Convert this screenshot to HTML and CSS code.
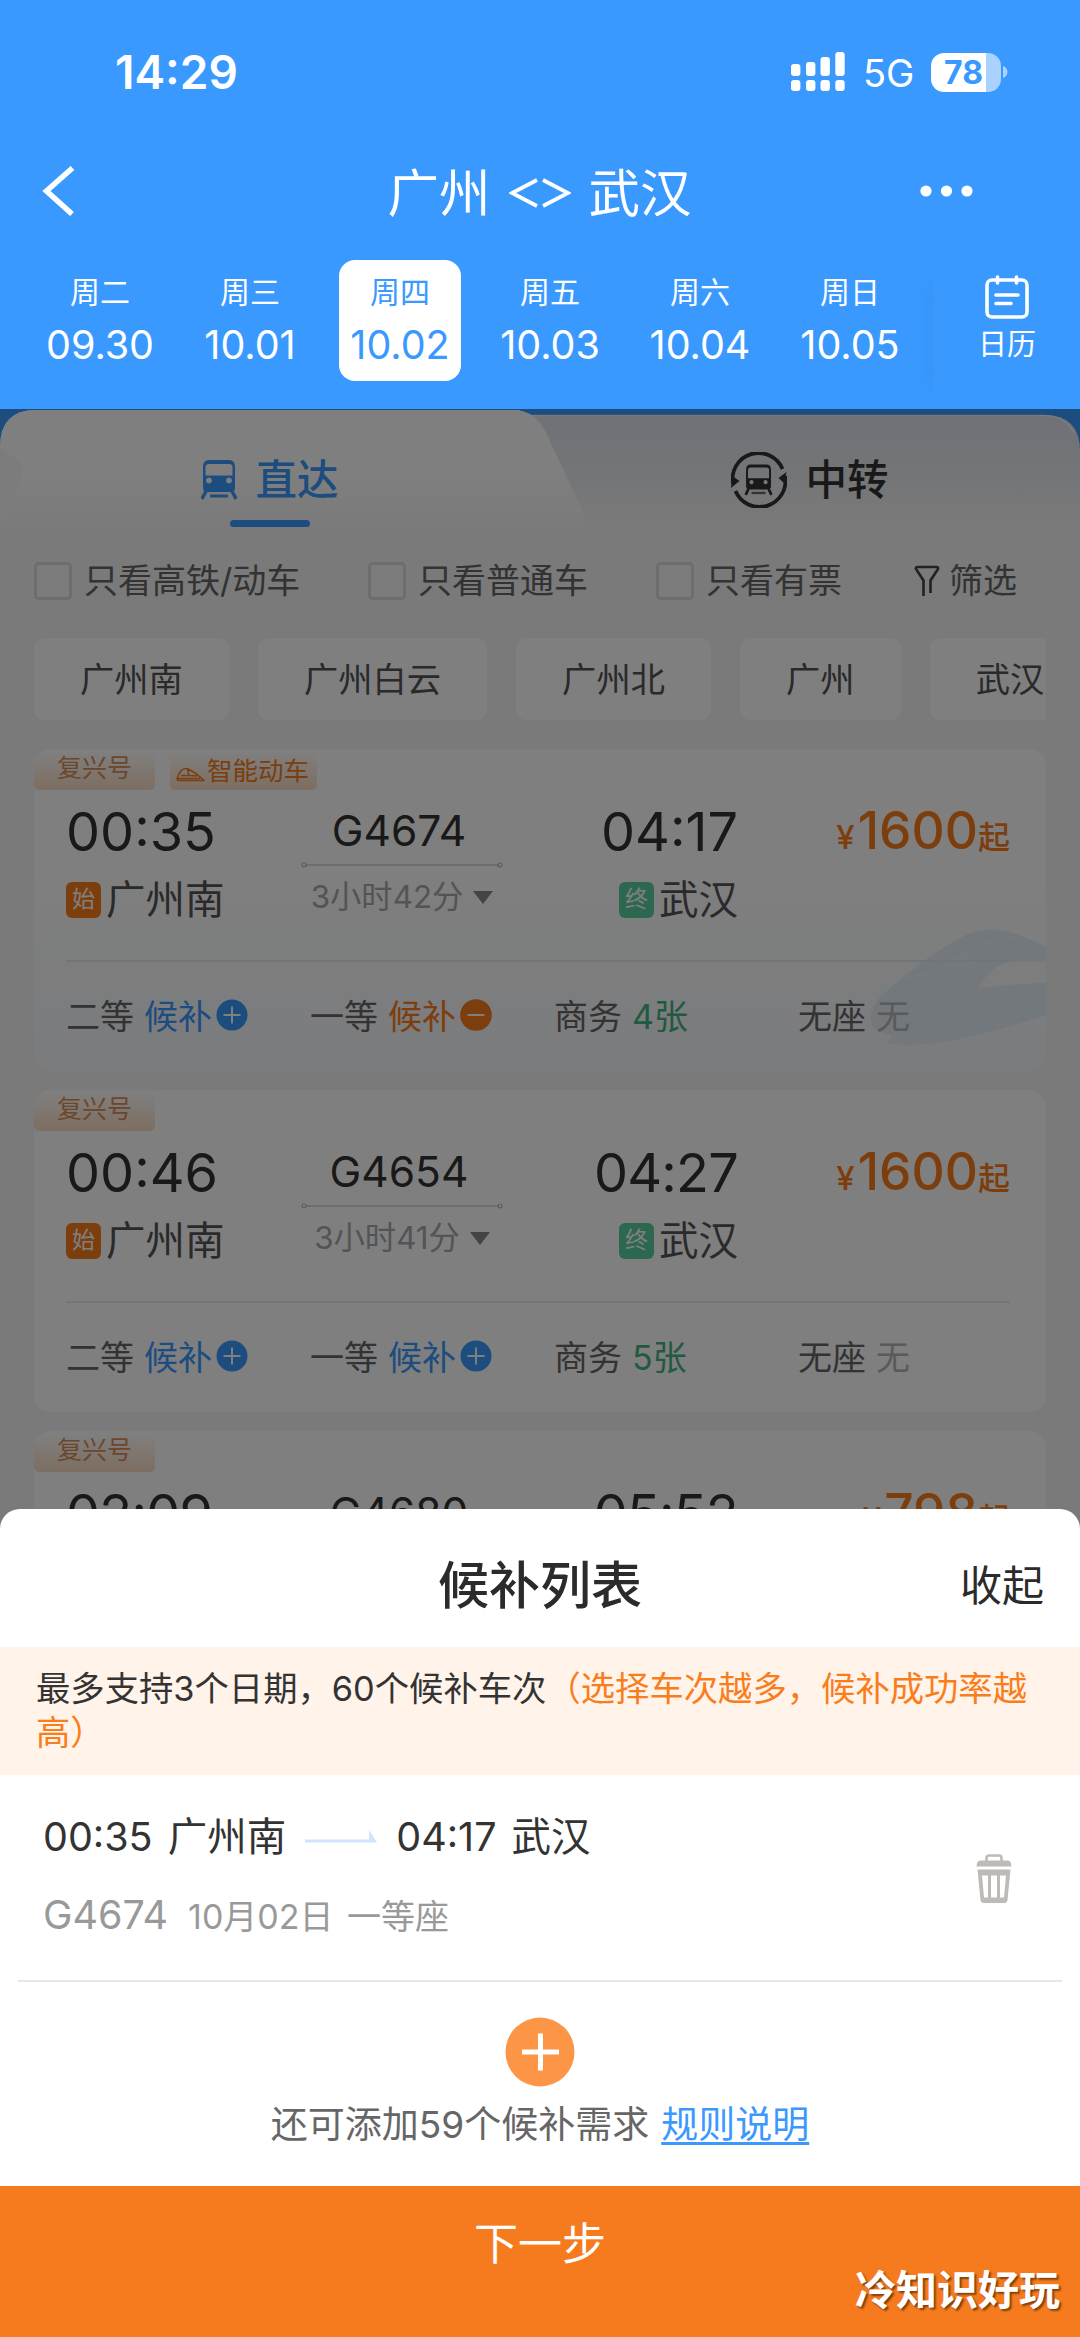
FILE: index.html
```html
<!DOCTYPE html>
<html lang="zh-CN">
<head>
<meta charset="utf-8">
<title>广州 &lt;&gt; 武汉</title>
<link rel="stylesheet" href="styles.css">
</head>
<body>
<svg class="sprite" width="0" height="0" aria-hidden="true">
  <symbol id="plus" viewBox="0 0 32 32"><circle cx="16" cy="16" r="15.5" fill="#3b99fc"/><path d="M7.5 16h17M16 7.5v17" stroke="#fff" stroke-width="2"/></symbol>
  <symbol id="minus" viewBox="0 0 32 32"><circle cx="16" cy="16" r="15.8" fill="#fa7d1b"/><path d="M7.5 16h17" stroke="#fff" stroke-width="2"/></symbol>
  <symbol id="span" viewBox="0 0 202 6"><g fill="none" stroke="#b3b6bc" stroke-width="1.2"><circle cx="3" cy="3" r="2"/><path d="M5 3h192"/><circle cx="199" cy="3" r="2"/></g></symbol>
</svg>
<div class="screen">
  <header class="header">
    <div class="status">
      <span class="clock">14:29</span>
      <div class="status-right">
        <svg class="signal" width="54" height="40" viewBox="0 0 54 40" fill="#fff"><rect x="0" y="12" width="9.4" height="12" rx="3"/><rect x="15" y="10" width="9.4" height="14" rx="3"/><rect x="29.5" y="5" width="9.4" height="19" rx="3"/><rect x="44.3" y="0" width="9.4" height="24" rx="3"/><rect x="0" y="28" width="9.4" height="11" rx="3"/><rect x="15" y="28" width="9.4" height="11" rx="3"/><rect x="29.5" y="28" width="9.4" height="11" rx="3"/><rect x="44.3" y="28" width="9.4" height="11" rx="3"/></svg>
        <span class="net">5G</span>
        <span class="battery">78</span>
        <svg class="nub" width="5" height="12" viewBox="0 0 5 12"><path d="M0 0c6 2 6 10 0 12z" fill="#a9d3fe"/></svg>
      </div>
    </div>
    <div class="nav">
      <svg width="34" height="50" viewBox="0 0 34 50"><path d="M30.500 2 4.500 25l25.500 23" fill="none" stroke="#fff" stroke-width="5.500"/></svg>
      <h1 class="route">广州 <svg width="62" height="30" viewBox="0 0 62 30"><path d="M28 2 3 15 28 28M34 2l25 13L34 28" fill="none" stroke="#fff" stroke-width="3.800"/></svg> 武汉</h1>
      <svg width="53" height="12" viewBox="0 0 53 12" fill="#fff"><circle cx="6" cy="6" r="5.600"/><circle cx="26.500" cy="6" r="5.600"/><circle cx="47" cy="6" r="5.600"/></svg>
    </div>
    <div class="dates">
      <div class="day"><span>周二</span><b>09.30</b></div>
      <div class="day"><span>周三</span><b>10.01</b></div>
      <div class="day on"><span>周四</span><b>10.02</b></div>
      <div class="day"><span>周五</span><b>10.03</b></div>
      <div class="day"><span>周六</span><b>10.04</b></div>
      <div class="day"><span>周日</span><b>10.05</b></div>
      <div class="calendar">
        <svg width="44" height="44" viewBox="0 0 44 44" fill="none" stroke="#fff" stroke-width="3.600" stroke-linecap="round"><rect x="2" y="5" width="40" height="37" rx="5"/><path d="M12.500 2v6M31.500 2v6M11 20h22M11 28.500h15"/></svg>
        <span>日历</span>
      </div>
    </div>
  </header>

  <main class="results">
    <div class="tabs">
      <svg class="tab-shape" width="1080" height="118" viewBox="0 0 1080 118">
        <defs>
          <linearGradient id="near" x2="0" y2="1"><stop offset=".5" stop-color="#fff"/><stop offset="1" stop-color="#f5f5f5"/></linearGradient>
          <linearGradient id="far" x2="0" y2="1"><stop offset="0" stop-color="#dde3ed"/><stop offset=".55" stop-color="#e9ebef"/><stop offset="1" stop-color="#f4f4f4"/></linearGradient>
        </defs>
        <path d="M0 118V38Q0 1 36 1H520V118z" fill="#f9f9f9"/>
        <path d="M500 6H1044Q1080 6 1080 42V118H500z" fill="url(#far)"/>
        <path d="M500 6.500H1044Q1066 7 1074 24" fill="none" stroke="#fff" stroke-opacity=".7" stroke-width="1.500"/>
        <path d="M6 118Q16 90 24 56L0 38Q0 1 36 1H512C532 1 541 12 548 28L590 118z" fill="url(#near)"/>
      </svg>
      <div class="tab active">
        <div class="tab-label">
          <svg width="36" height="40" viewBox="0 0 36 40"><path fill="#3b99fc" fill-rule="evenodd" d="M8 0h20q6 0 6 7v21q0 4-4 4H6q-4 0-4-4V7q0-7 6-7zM4.500 6v9.500h27V6q-1-2-3-2h-21q-2 0-3 2zM8 17.500a3 3 0 1 0 .01 0zM28 17.500a3 3 0 1 0 .01 0z"/><path d="M5 31.500.8 39M31 31.500l4.200 7.500" stroke="#3b99fc" stroke-width="3.500"/><path d="M9 36h18" stroke="#3b99fc" stroke-width="3"/></svg>
          <span>直达</span>
        </div>
        <i class="bar"></i>
      </div>
      <div class="tab">
        <div class="tab-label">
          <svg width="56" height="56" viewBox="0 0 56 56"><path d="M51.500 17A26 26 0 0 0 2 32M4.500 39A26 26 0 0 0 54 24" fill="none" stroke="#333" stroke-width="3.800"/><path d="M0 36 1.500 24l7 5zM55.500 20l-8 6 5.500 5z" fill="#333"/><g transform="translate(13.500 12.500) scale(.78)"><path fill="#333" fill-rule="evenodd" d="M8 0h20q6 0 6 7v21q0 4-4 4H6q-4 0-4-4V7q0-7 6-7zM4.500 6v11.500h27V6q-1-2-3-2h-21q-2 0-3 2zM9 20a2.600 2.600 0 1 0 .01 0zM27 20a2.600 2.600 0 1 0 .01 0z"/><path d="M5 31.500 1.500 39M31 31.500l3.500 7.500" stroke="#333" stroke-width="3.500"/><path d="M9 36.500h18" stroke="#666" stroke-width="3"/></g></svg>
          <span>中转</span>
        </div>
      </div>
    </div>

    <div class="filters">
      <label class="check f1"><i></i>只看高铁/动车</label>
      <label class="check f2"><i></i>只看普通车</label>
      <label class="check f3"><i></i>只看有票</label>
      <span class="more"><svg width="26" height="32" viewBox="0 0 26 32"><path d="M9.500 31V15.500L2 4q-.5-2 1.500-2h19q2 0 1.500 2l-7.500 11.500V28" fill="none" stroke="#444" stroke-width="2.600"/></svg>筛选</span>
    </div>

    <div class="stations">
      <span>广州南</span><span>广州白云</span><span>广州北</span><span>广州</span><span>武汉</span>
    </div>

    <div class="trains">
      <article class="card smart">
        <svg class="train-art" width="178" height="118" viewBox="0 0 178 118"><path d="M178 18C150 4 126-5 98 6 72 18 36 46 12 68-2 84-2 104 24 106L20 114C64 122 128 102 178 86V54C150 55 132 56 110 60 118 44 132 32 148 33H178z" fill="#e6f1fb"/><path d="M34 47C70 54 92 14 148 8M80 36q18-10 32-6-14 10-32 6z" fill="none" stroke="#eff5fb" stroke-width="2"/></svg>
        <div class="tags"><span class="tag">复兴号</span><span class="tag wide"><svg width="29" height="15" viewBox="0 0 29 15" fill="none" stroke="#f57c1f" stroke-width="1.500"><path d="M1 12Q4 1 11 1.500 19 5 28 13.500H2zM5 8.500h8l-1.500-6M13 8.500l8 .5M1 11.500h23"/></svg>智能动车</span></div>
        <div class="trip">
          <div class="from"><strong>00:35</strong><p><i class="mark">始</i>广州南</p></div>
          <div class="mid"><b>G4674</b><svg width="202" height="6"><use href="#span"/></svg><p>3小时42分<i class="caret"></i></p></div>
          <div class="to"><strong>04:17</strong><p><i class="mark end">终</i>武汉</p></div>
          <div class="price"><small>¥</small><b>1600</b><em>起</em></div>
        </div>
        <div class="seats">
          <span>二等 <a>候补</a><svg width="32" height="32"><use href="#plus"/></svg></span>
          <span>一等 <a class="picked">候补</a><svg width="32" height="32"><use href="#minus"/></svg></span>
          <span>商务 <a class="left">4张</a></span>
          <span>无座 <a class="none">无</a></span>
        </div>
      </article>

      <article class="card">
        <div class="tags"><span class="tag">复兴号</span></div>
        <div class="trip">
          <div class="from"><strong>00:46</strong><p><i class="mark">始</i>广州南</p></div>
          <div class="mid"><b>G4654</b><svg width="202" height="6"><use href="#span"/></svg><p>3小时41分<i class="caret"></i></p></div>
          <div class="to"><strong class="snug">04:27</strong><p><i class="mark end">终</i>武汉</p></div>
          <div class="price"><small>¥</small><b>1600</b><em>起</em></div>
        </div>
        <div class="seats">
          <span>二等 <a>候补</a><svg width="32" height="32"><use href="#plus"/></svg></span>
          <span>一等 <a>候补</a><svg width="32" height="32"><use href="#plus"/></svg></span>
          <span>商务 <a class="left">5张</a></span>
          <span>无座 <a class="none">无</a></span>
        </div>
      </article>

      <article class="card">
        <div class="tags"><span class="tag">复兴号</span></div>
        <div class="trip">
          <div class="from"><strong class="snug">02:09</strong></div>
          <div class="mid"><b>G4680</b></div>
          <div class="to"><strong class="snug">05:52</strong></div>
          <div class="price"><small>¥</small><b>798</b><em>起</em></div>
        </div>
      </article>
    </div>
    <div class="mask"></div>
  </main>

  <section class="sheet">
    <div class="sheet-head"><h2>候补列表</h2><span class="fold">收起</span></div>
    <p class="notice">最多支持3个日期，60个候补车次<em>（选择车次越多，候补成功率越高）</em></p>
    <div class="pick">
      <div class="pick-info">
        <div class="pick-route"><span>00:35 广州南</span><svg width="72" height="13" viewBox="0 0 72 13"><path d="M0 9.500h64V0l8 12.500H0z" fill="#cfe4fd"/></svg><span>04:17 武汉</span></div>
        <div class="pick-meta"><b>G4674</b><span>10月02日 一等座</span></div>
      </div>
      <svg class="trash" width="36" height="50" viewBox="0 0 36 50"><path d="M10.500 8V4q0-2.500 2.500-2.500h10q2.500 0 2.500 2.500v4" fill="none" stroke="#bdbab8" stroke-width="2.600"/><path fill="#bdbab8" fill-rule="evenodd" d="M4 6.500h28q3 0 3.500 6H.5Q1 6.500 4 6.500zM1.500 15.500h33L31.500 46q-.3 3-3.500 3H8q-3.200 0-3.500-3zM6 21.500l2 22h4v-22zM15 21.500v22h6v-22zM24 21.500v22h4l2-22z"/></svg>
    </div>
    <div class="add">
      <svg width="70" height="70" viewBox="0 0 70 70"><circle cx="35" cy="35" r="34.500" fill="#fc9546"/><path d="M17 35h37M35.500 16.500v37" stroke="#fff" stroke-width="5"/></svg>
      <p>还可添加59个候补需求<a>规则说明</a></p>
    </div>
    <div class="next">下一步</div>
    <span class="signature">冷知识好玩</span>
  </section>
</div>
</body>
</html>
```
FILE: styles.css
```css
* { box-sizing: border-box; margin: 0; padding: 0; }
body { font-family: Inter, "Noto Sans CJK SC", sans-serif; color: #333; background: #fff; }
svg { display: block; flex: none; }
i, em { font-style: normal; }
b, strong, h1 { font-weight: 400; }
.sprite { position: absolute; }
.screen { position: relative; width: 1080px; height: 2337px; overflow: hidden; display: flex; flex-direction: column; }

/* header */
.header { height: 409px; flex: none; background: #3a99fe; color: #fff; display: flex; flex-direction: column; }
.status { height: 144px; padding: 0 72px 0 115px; display: flex; justify-content: space-between; align-items: center; }
.clock { font-size: 46px; font-weight: 600; line-height: 60px; }
.status-right { display: flex; align-items: center; }
.net { width: 50px; margin: 2px 18px 0 18px; font-size: 38px; line-height: 40px; }
.battery { width: 70px; height: 39px; border-radius: 13px; background: linear-gradient(90deg, #fff 55px, #a9d3fe 55px); color: #3a99fe; font-size: 32px; font-weight: 700; line-height: 39px; padding-left: 13px; }
.nub { margin-left: 2px; }
.nav { height: 94px; padding: 0 107px 0 42px; display: flex; align-items: center; justify-content: space-between; }
.route { font-size: 51.500px; line-height: 60px; display: flex; align-items: center; gap: 18px; margin-left: 83px; padding-top: 4px; }
.dates { display: flex; padding: 22px 0 0 24px; }
.day { width: 122px; height: 121px; margin-right: 28px; padding-top: 12px; border-radius: 16px; display: flex; flex-direction: column; align-items: center; }
.day:first-child { margin-left: 15px; }
.day.on { background: #fff; color: #3a99fe; }
.day span { font-size: 30px; line-height: 40px; }
.day b { font-size: 39.500px; line-height: 44px; margin-top: 11px; white-space: nowrap; }
.calendar { width: 146px; height: 122px; margin: 15px 0 0 -5px; box-shadow: -18px 0 10px -10px rgba(40, 120, 220, .1); display: flex; flex-direction: column; align-items: center; }
.calendar span { font-size: 29px; line-height: 40px; margin-top: 6px; }

/* result list */
.results { position: relative; flex: 1; background: #f4f4f4; }
.mask { position: absolute; inset: 0; background: rgba(0, 0, 0, .5); }
.tabs { position: relative; height: 118px; display: flex; background: linear-gradient(#3a99fe 60px, #f4f4f4 60px); }
.tab-shape { position: absolute; left: 0; top: 0; }
.tab { position: relative; width: 540px; display: flex; flex-direction: column; align-items: center; padding-top: 43px; font-size: 41.500px; font-weight: 500; }
.tab.active { color: #3b99fc; }
.tab-label { display: flex; align-items: center; gap: 18px; height: 56px; line-height: 56px; }
.bar { width: 80px; height: 7px; border-radius: 4px; background: #3b99fc; margin-top: 12px; }
.filters { height: 111px; padding: 0 20px 3px 34px; display: flex; align-items: center; font-size: 34px; line-height: 50px; color: #666; white-space: nowrap; }
.check { flex: none; display: flex; align-items: center; gap: 12px; }
.check i { width: 38px; height: 38px; border: 3px solid #dadada; border-radius: 5px; background: #f8f8f8; }
.f1 { width: 334px; }
.f2 { width: 288px; }
.f3 { width: 258px; }
.more { display: flex; align-items: center; gap: 9px; }
.stations { height: 82px; margin: 0 34px; display: flex; gap: 29px; overflow: hidden; }
.stations span { flex: none; height: 82px; padding: 0 46px; border-radius: 10px; background: #fff; font-size: 34.300px; line-height: 83px; color: #555; }
.trains { margin: 29px 34px 0; display: flex; flex-direction: column; gap: 19px; }
.card { position: relative; height: 322px; border-radius: 16px; background: #fff; overflow: hidden; }
.smart { background: linear-gradient(#fff 30%, #f6f8fb); }
.train-art { position: absolute; right: 0; top: 180px; }
.tags { position: relative; display: flex; gap: 15px; height: 55px; padding-top: 3px; }
.tag { width: 121px; height: 38px; border-radius: 0 0 5px 5px; background: linear-gradient(#fff, #fbdcc2); color: #d68e58; font-size: 25px; line-height: 33px; text-align: center; }
.tag.wide { width: 147px; display: flex; align-items: center; gap: 2px; padding-left: 6px; color: #f57c1f; font-size: 25.500px; white-space: nowrap; line-height: 36px; }
.tag.wide svg { margin-top: 6px; }
.trip { position: relative; display: grid; grid-template-columns: 236px 200px 236px 1fr; height: 158px; margin: 0 36px 0 32px; border-bottom: 2px solid #e9ebee; }
.smart .trip { border-color: #e3eaf0; }
.from strong, .to strong { display: block; font-size: 54px; line-height: 56px; color: #333; }
.from .snug, .to .snug { letter-spacing: -.8px; }
.to { text-align: right; }
.from p, .to p { margin-top: 19px; height: 42px; font-size: 39.500px; line-height: 42px; color: #555; display: flex; align-items: center; }
.to p { justify-content: flex-end; }
.mark { width: 35px; height: 36px; margin-right: 5px; border-radius: 6px; background: #fa7d1b; color: #fff; font-size: 23px; line-height: 35px; text-align: center; }
.mark.end { background: #58cfa0; }
.mid { display: flex; flex-direction: column; align-items: center; }
.mid b { font-size: 42.500px; line-height: 54px; color: #333; margin-right: 6px; }
.mid svg { margin: 4px 0 0; }
.mid p { margin-top: 8px; display: flex; align-items: center; gap: 10px; font-size: 31.300px; line-height: 42px; color: #a5a8ad; white-space: nowrap; }
.caret { border: 10px solid transparent; border-top: 13px solid #85888c; border-bottom: 0; }
.price { display: flex; justify-content: flex-end; align-items: baseline; height: 56px; line-height: 52px; color: #fa7d1b; }
.price small { margin-right: 3px; font-size: 33px; font-weight: 500; }
.price b { font-size: 51.500px; font-weight: 500; }
.price em { font-size: 32px; font-weight: 500; }
.seats { position: relative; display: grid; grid-template-columns: repeat(4, 244px); height: 105px; padding-left: 32px; font-size: 34px; color: #666; white-space: nowrap; }
.seats span { display: flex; align-items: center; }
.seats a { margin: 0 4px 0 10px; color: #3b99fc; }
.seats .picked { color: #fa7d1b; }
.seats .left { color: #43b580; }
.seats .none { color: #b5b5b5; }

/* waiting list sheet */
.sheet { position: absolute; left: 0; right: 0; bottom: 0; height: 828px; border-radius: 20px 20px 0 0; background: #fff; display: flex; flex-direction: column; overflow: hidden; }
.sheet-head { height: 138px; padding: 15px 36px 0 0; display: flex; align-items: center; color: #2b2b2b; }
.sheet-head h2 { flex: 1; padding-left: 120px; text-align: center; font-size: 51px; font-weight: 500; line-height: 70px; }
.fold { font-size: 42px; line-height: 60px; }
.notice { height: 128px; padding: 20px 36px; background: #fff3ea; font-size: 34.350px; line-height: 44px; }
.notice em { color: #fa7d1b; }
.pick { height: 207px; margin: 0 18px; padding: 0 50px 0 25px; border-bottom: 2px solid #e6e9ec; display: flex; justify-content: space-between; align-items: center; }
.pick-info { padding-bottom: 4px; }
.pick-route { display: flex; align-items: center; gap: 19px; font-size: 39.500px; line-height: 52px; word-spacing: 4px; }
.pick-meta { display: flex; align-items: center; gap: 20px; margin-top: 26px; color: #999; }
.pick-meta b { font-size: 39.500px; line-height: 52px; }
.pick-meta span { font-size: 34px; word-spacing: 4px; }
.trash { margin-top: 2px; }
.add { height: 204px; padding-top: 35px; display: flex; flex-direction: column; align-items: center; }
.add p { margin-top: 12px; font-size: 37px; line-height: 52px; color: #666; }
.add a { margin-left: 12px; color: #3b99fc; text-decoration: underline; text-decoration-thickness: 3px; text-underline-offset: 4px; }
.next { flex: 1; background: #f67b1f; color: #fff; text-align: center; font-size: 44px; line-height: 116px; }
.signature { position: absolute; right: 20px; bottom: 17px; color: #fff; font-size: 41px; font-weight: 700; line-height: 60px; text-shadow: 2px 2px 2px rgba(80, 40, 0, .7); }
```
